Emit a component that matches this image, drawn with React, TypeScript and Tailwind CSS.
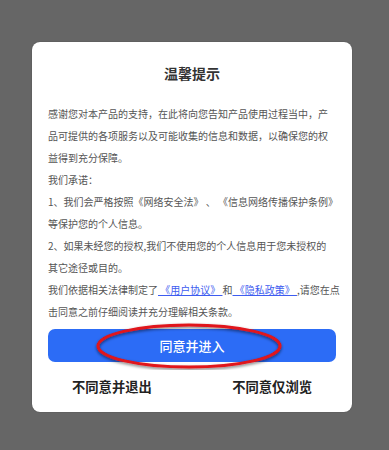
import React from "react";

const lines: React.ReactNode[] = [
  "感谢您对本产品的支持，在此将向您告知产品使用过程当中，产",
  "品可提供的各项服务以及可能收集的信息和数据，以确保您的权",
  "益得到充分保障。",
  "我们承诺：",
  "1、我们会严格按照《网络安全法》 、 《信息网络传播保护条例》",
  "等保护您的个人信息。",
  "2、如果未经您的授权,我们不使用您的个人信息用于您未授权的",
  "其它途径或目的。",
];

export default function App() {
  return (
    <div
      className="w-[389px] h-[450px] bg-[#666666] pt-[42px]"
      style={{ fontFamily: '"Noto Sans CJK SC", "Noto Sans", sans-serif' }}
    >
      {/* Dialog */}
      <div className="ml-[32px] w-[320px] h-[370px] bg-white rounded-[8px] px-[16px] pt-[21px] shadow-[0_0_1px_rgba(0,0,0,0.5)]">
        <div className="text-center text-[14px] leading-[20px] font-bold text-[#333333]">
          温馨提示
        </div>

        <div className="mt-[20px] text-[10px] leading-[22px] text-[#555555]">
          {lines.map((l, i) => (
            <div key={i} className="whitespace-nowrap">
              {l}
            </div>
          ))}
          <div className="whitespace-nowrap">
            我们依据相关法律制定了
            <span className="text-[#3d5cf0] underline"> 《用户协议》 </span>和
            <span className="text-[#3d5cf0] underline"> 《隐私政策》 </span>,请您在点
          </div>
          <div className="whitespace-nowrap">击同意之前仔细阅读并充分理解相关条款。</div>
        </div>

        {/* Primary action */}
        <div className="relative mt-[6px]">
          <button className="w-full h-[33px] rounded-[7px] bg-[#2c6cf6] text-white text-[13px] font-medium">
            同意并进入
          </button>
          <svg
            className="absolute left-[46px] top-[-7px] pointer-events-none"
            width="190"
            height="48"
            viewBox="0 0 190 48"
          >
            <defs>
              <filter id="sh" x="-10%" y="-30%" width="120%" height="160%">
                <feDropShadow dx="0" dy="1.5" stdDeviation="1.5" floodColor="#000" floodOpacity="0.55" />
              </filter>
            </defs>
            <ellipse
              cx="95"
              cy="24"
              rx="91"
              ry="21"
              fill="none"
              stroke="#e0131a"
              strokeWidth="3"
              filter="url(#sh)"
            />
          </svg>
        </div>

        {/* Secondary actions */}
        <div className="mt-[15px] flex justify-between px-[24px] text-[13.3px] leading-[20px] font-semibold text-[#222222]">
          <span>不同意并退出</span>
          <span>不同意仅浏览</span>
        </div>
      </div>
    </div>
  );
}
